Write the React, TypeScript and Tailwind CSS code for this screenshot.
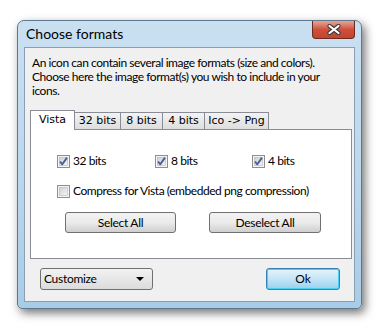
import React from "react";

const ui = { fontFamily: 'Lato, "Liberation Sans", sans-serif' };
const tahoma = { fontFamily: '"DejaVu Sans", "Liberation Sans", sans-serif' };

function CheckBox({ checked }: { checked: boolean }) {
  return (
    <svg width="13" height="13" viewBox="0 0 13 13" className="shrink-0">
      <defs>
        <linearGradient id="cbg" x1="0" y1="0" x2="1" y2="1">
          <stop offset="0" stopColor="#cbcfd5" />
          <stop offset="1" stopColor="#f6f6f6" />
        </linearGradient>
      </defs>
      <rect x="0.5" y="0.5" width="12" height="12" fill="#f4f4f4" stroke="#8e8f8f" />
      <rect x="2.5" y="2.5" width="8" height="8" fill="url(#cbg)" stroke="#b4b8be" strokeWidth="0.6" />
      {checked && (
        <path d="M3 6.5 L5.3 9.3 L10 2.6" fill="none" stroke="#4a5f97" strokeWidth="1.9" strokeLinejoin="round" />
      )}
    </svg>
  );
}

function Check({ label, checked }: { label: string; checked: boolean }) {
  return (
    <div className="flex items-center gap-[3px] text-[12px] leading-[14px] tracking-[-0.45px] text-black whitespace-nowrap" style={ui}>
      <CheckBox checked={checked} />
      <span>{label}</span>
    </div>
  );
}

function Button({ children, w }: { children: React.ReactNode; w: string }) {
  return (
    <div
      className={`${w} h-[21px] rounded-[3px] border border-[#707070] bg-gradient-to-b from-[#f2f2f2] via-[#ebebeb] to-[#cfcfcf] flex items-center justify-center text-[12px] tracking-[-0.3px] text-black`}
      style={ui}
    >
      {children}
    </div>
  );
}

function Tab({ label, w, active }: { label: string; w: string; active?: boolean }) {
  if (active) {
    return (
      <div
        className={`${w} h-[20px] -mb-px border border-b-0 border-[#898c95] bg-white flex items-center justify-center text-[11px] text-black z-10`}
        style={tahoma}
      >
        {label}
      </div>
    );
  }
  return (
    <div
      className={`${w} h-[17px] border border-b-0 border-l-0 border-[#898c95] bg-gradient-to-b from-[#f3f3f3] to-[#dedede] flex items-center justify-center text-[11px] text-black whitespace-nowrap`}
      style={tahoma}
    >
      {label}
    </div>
  );
}

export default function App() {
  return (
    <div className="w-[384px] h-[329px] bg-white pl-[17px] pt-[20px]">
      <div className="w-[345px] h-[289px] rounded-t-[7px] rounded-b-[5px] border border-[#5d7890] bg-gradient-to-b from-[#c9e0f1] via-[#bcd8ed] to-[#a9cce6] shadow-[3px_4px_10px_rgba(0,0,0,0.55)] flex flex-col px-[6px] pb-[6px]">
        {/* Title bar */}
        <div className="h-[26px] flex items-start justify-between">
          <div className="pl-[2px] pt-[5px] text-[14px] leading-[16px] text-black" style={ui}>
            Choose formats
          </div>
          <div className="w-[43px] h-[18px] rounded-b-[4px] border border-t-0 border-[#6d2b20] bg-gradient-to-b from-[#e6a596] via-[#cf4f3a] to-[#c24530] flex items-center justify-center">
            <svg width="16" height="11" viewBox="0 0 16 11">
              <path d="M3.5 2 L12.5 9 M12.5 2 L3.5 9" stroke="#3b3b3b" strokeWidth="4.2" fill="none" strokeLinecap="round" />
              <path d="M3.5 2 L12.5 9 M12.5 2 L3.5 9" stroke="white" strokeWidth="2.2" fill="none" strokeLinecap="round" />
            </svg>
          </div>
        </div>

        {/* Client area */}
        <div className="flex-1 border border-[#8a9fb3] bg-[#f0f0f0] flex flex-col">
          <div className="pl-[7px] pt-[8px] text-[12px] leading-[14px] tracking-[-0.45px] text-black whitespace-nowrap" style={ui}>
            An icon can contain several image formats (size and colors).
            <br />
            Choose here the image format(s) you wish to include in your
            <br />
            icons.
          </div>

          <div className="ml-[5px] mt-[12px] w-[322px]">
            <div className="flex items-end">
              <Tab label="Vista" w="w-[45px]" active />
              <Tab label="32 bits" w="w-[46px]" />
              <Tab label="8 bits" w="w-[42px]" />
              <Tab label="4 bits" w="w-[42px]" />
              <Tab label="Ico -> Png" w="w-[64px]" />
            </div>
            <div className="h-[130px] border border-[#898c95] bg-white flex flex-col">
              <div className="grid grid-cols-[98px_97px_auto] pl-[26px] pt-[24px]">
                <Check label="32 bits" checked />
                <Check label="8 bits" checked />
                <Check label="4 bits" checked />
              </div>
              <div className="pl-[26px] pt-[16px]">
                <Check label="Compress for Vista (embedded png compression)" checked={false} />
              </div>
              <div className="flex pl-[34px] pt-[14px] gap-[33px]">
                <Button w="w-[111px]">Select All</Button>
                <Button w="w-[112px]">Deselect All</Button>
              </div>
            </div>
          </div>

          <div className="flex items-center justify-between pl-[15px] pr-[14px] pt-[9px]">
            <div
              className="w-[113px] h-[22px] rounded-[3px] border border-[#707070] bg-gradient-to-b from-[#f2f2f2] to-[#dcdcdc] flex items-center justify-between pl-[3px] pr-[8px] text-[12px] tracking-[-0.3px] text-black"
              style={ui}
            >
              <span>Customize</span>
              <svg width="8" height="4" viewBox="0 0 8 4">
                <path d="M0 0 H8 L4 4 Z" fill="black" />
              </svg>
            </div>
            <div
              className="w-[74px] h-[22px] rounded-[3px] border border-[#3c7fb1] bg-gradient-to-b from-[#e5f4fc] via-[#c4e5f6] to-[#98d1ef] shadow-[inset_0_0_0_1px_#48d1f8] flex items-center justify-center text-[12px] text-black"
              style={ui}
            >
              Ok
            </div>
          </div>
        </div>
      </div>
    </div>
  );
}
